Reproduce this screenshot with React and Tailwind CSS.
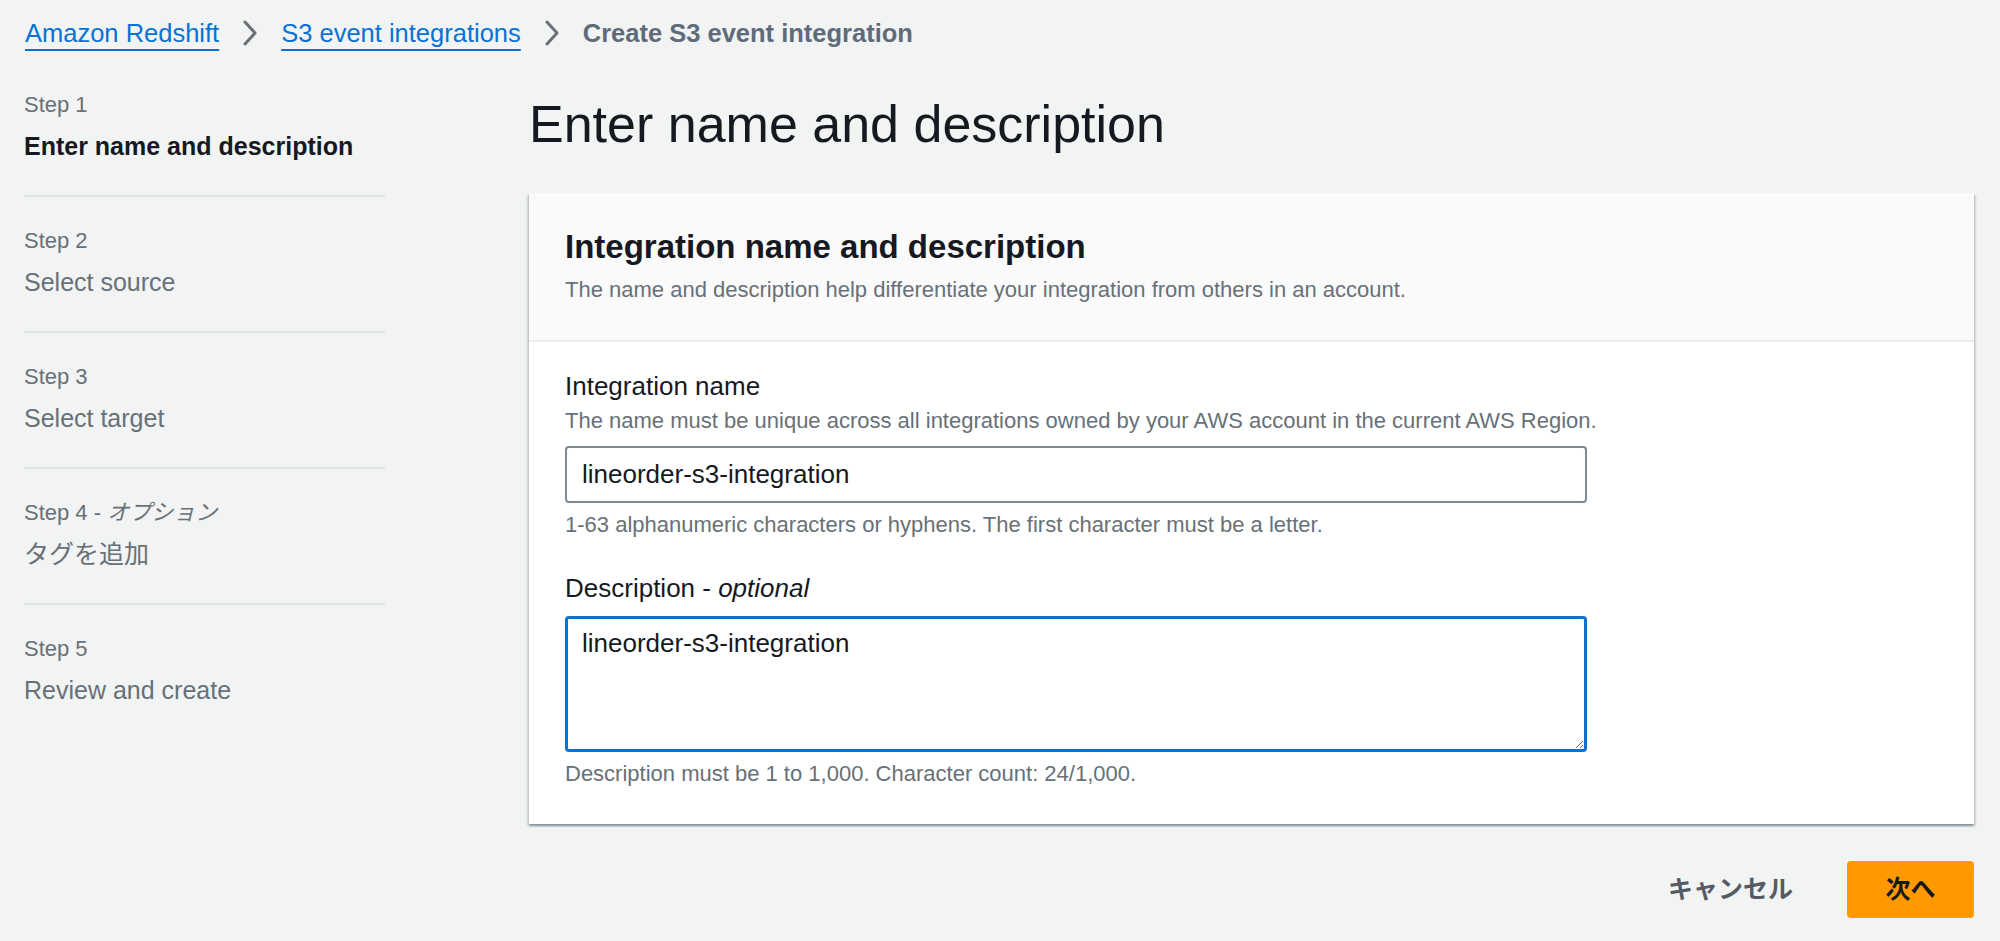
import React from "react";

function Chevron() {
  return (
    <svg width="18" height="26" viewBox="0 0 18 26" className="mx-[22px] shrink-0" aria-hidden="true">
      <path d="M4 2 L14 13 L4 24" fill="none" stroke="#687078" strokeWidth="3" strokeLinecap="round" strokeLinejoin="round" />
    </svg>
  );
}

function Step({ label, title, active, last, first }) {
  return (
    <div className={`${first ? "" : "pt-[30px]"} ${last ? "" : "pb-[33px] border-b-2 border-[#dfe3e6]"}`}>
      <div className="text-[22px] leading-[28px] text-[#687078]">{label}</div>
      <div className={`mt-[11px] text-[25px] leading-[32px] ${active ? "font-bold text-[#16191f]" : "text-[#687078]"}`}>{title}</div>
    </div>
  );
}

export default function App() {
  return (
    <div className="min-h-[941px] w-full bg-[#f2f3f3] font-['Liberation_Sans','Noto_Sans_CJK_JP',sans-serif] text-[#16191f]">
      <nav className="flex items-center pl-[25px] pt-[18px] h-[48px] text-[25.5px] leading-[30px]">
        <a className="text-[#0972d3] underline decoration-2 underline-offset-[7px]">Amazon Redshift</a>
        <Chevron />
        <a className="text-[#0972d3] underline decoration-2 underline-offset-[7px]">S3 event integrations</a>
        <Chevron />
        <span className="font-bold text-[#5f6b7a]">Create S3 event integration</span>
      </nav>

      <div className="flex pl-[24px] pr-[26px]">
        <aside className="w-[361px] shrink-0 pt-[43px]">
          <Step first label="Step 1" title="Enter name and description" active />
          <Step label="Step 2" title="Select source" />
          <Step label="Step 3" title="Select target" />
          <Step
            label={
              <span>
                Step 4 - <span className="italic">オプション</span>
              </span>
            }
            title="タグを追加"
          />
          <Step last label="Step 5" title="Review and create" />
        </aside>

        <main className="ml-[144px] flex-1 min-w-0">
          <h1 className="pt-[46px] text-[52px] leading-[60px] font-normal text-[#16191f]">Enter name and description</h1>

          <section className="mt-[39px] bg-white shadow-[0_2px_2px_rgba(0,28,36,0.3),2px_2px_2px_rgba(0,28,36,0.12),-2px_2px_2px_rgba(0,28,36,0.12)]">
            <div className="bg-[#fafafa] border-b-2 border-[#eaeded] px-[36px] pt-[34px] pb-[36px]">
              <h2 className="text-[33px] leading-[40px] font-bold text-[#16191f]">Integration name and description</h2>
              <p className="mt-[9px] text-[22px] leading-[28px] text-[#687078]">
                The name and description help differentiate your integration from others in an account.
              </p>
            </div>

            <div className="px-[36px] pt-[28px] pb-[36px]">
              <label className="block text-[26px] leading-[32px] text-[#16191f]">Integration name</label>
              <p className="mt-[5px] text-[22px] leading-[28px] text-[#687078]">
                The name must be unique across all integrations owned by your AWS account in the current AWS Region.
              </p>
              <div className="mt-[11px] w-[1022px] h-[57px] flex items-center border-2 border-[#7d8998] rounded-[4px] bg-white pl-[15px] text-[26px] text-[#16191f]">
                lineorder-s3-integration
              </div>
              <p className="mt-[8px] text-[22px] leading-[28px] text-[#687078]">
                1-63 alphanumeric characters or hyphens. The first character must be a letter.
              </p>

              <label className="block mt-[33px] text-[26px] leading-[32px] text-[#16191f]">
                Description - <span className="italic">optional</span>
              </label>
              <textarea
                defaultValue="lineorder-s3-integration"
                className="block mt-[12px] w-[1022px] h-[136px] border-[3px] border-[#0972d3] rounded-[4px] bg-white pl-[14px] pt-[8px] text-[26px] leading-[32px] text-[#16191f] outline-none resize"
              />
              <p className="mt-[8px] text-[22px] leading-[28px] text-[#687078]">
                Description must be 1 to 1,000. Character count: 24/1,000.
              </p>
            </div>
          </section>

          <div className="mt-[37px] flex items-center justify-end gap-[54px]">
            <span className="text-[25px] font-bold text-[#545b64]">キャンセル</span>
            <button className="w-[127px] h-[57px] rounded-[4px] bg-[#ff9900] text-[25px] font-bold text-[#16191f]">次へ</button>
          </div>
        </main>
      </div>
    </div>
  );
}
